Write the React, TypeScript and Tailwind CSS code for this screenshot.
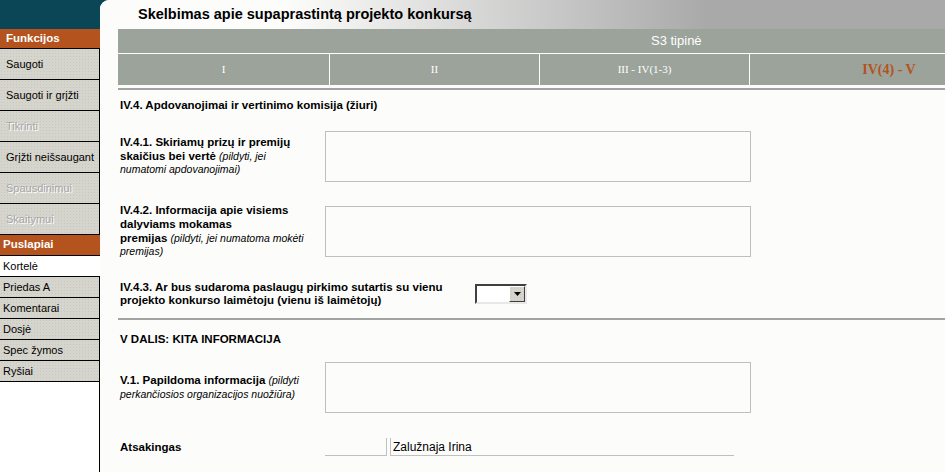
import React from "react";

const font = { fontFamily: '"Liberation Sans", Arial, sans-serif' };

const grey =
  "bg-[#d6d5cd] bg-[radial-gradient(#c9c8c0_0.6px,transparent_0.8px)] bg-[length:3px_3px]";

function SideItem({ label, disabled }: { label: string; disabled?: boolean }) {
  return (
    <div className={"h-[31px] flex items-center pl-[6px] border-b border-r border-black text-[11px] leading-none whitespace-nowrap " + grey}>
      <span
        className={disabled ? "text-[#a6a6a6] [text-shadow:1px_1px_0_#ffffff]" : "text-black"}
      >
        {label}
      </span>
    </div>
  );
}

function PageItem({ label, active }: { label: string; active?: boolean }) {
  return (
    <div
      className={
        "h-[21px] flex items-center pl-[3px] border-b border-black text-[11px] leading-none text-black " +
        (active ? "bg-white" : grey + " border-r")
      }
    >
      {label}
    </div>
  );
}

function Textbox() {
  return <div className="w-[426px] h-[51px] border border-[#bfbfbf] bg-[#fcfdfb] shrink-0" />;
}

export default function App() {
  return (
    <div className="w-[945px] h-[472px] overflow-hidden flex bg-[#fcfdfb] text-black" style={font}>
      {/* Sidebar */}
      <div className="w-[100px] shrink-0 flex flex-col bg-white">
        <div className="h-[29px] bg-[#0b4656]" />
        <div className="h-[20px] bg-[#b4531e] border-b border-black flex items-center pl-[6px] text-white font-bold text-[11.5px]">
          Funkcijos
        </div>
        <SideItem label="Saugoti" />
        <SideItem label="Saugoti ir grįžti" />
        <SideItem label="Tikrinti" disabled />
        <SideItem label="Grįžti neišsaugant" />
        <SideItem label="Spausdinimui" disabled />
        <SideItem label="Skaitymui" disabled />
        <div className="h-[21px] bg-[#b4531e] border-b border-black flex items-center pl-[3px] text-white font-bold text-[11.5px]">
          Puslapiai
        </div>
        <PageItem label="Kortelė" active />
        <PageItem label="Priedas A" />
        <PageItem label="Komentarai" />
        <PageItem label="Dosjė" />
        <PageItem label="Spec žymos" />
        <PageItem label="Ryšiai" />
        <div className="flex-1 border-r border-black" />
      </div>

      {/* Main */}
      <div className="flex-1 flex flex-col min-w-0 bg-[#0b4656]">
        <div className="flex-1 flex flex-col bg-[#fcfdfb] rounded-tl-[9px] overflow-hidden">
          <div className="h-[29px] shrink-0 flex items-center pl-[38px] bg-[linear-gradient(to_right,#fcfdfb_22%,#a9a9a9_72%)]">
            <span className="font-bold text-[14.5px] text-black">Skelbimas apie supaprastintą projekto konkursą</span>
          </div>

          <div className="ml-[18px] w-[910px] shrink-0">
            <div className="h-[24px] bg-[#9ca39b] flex items-center pl-[533px] text-white text-[13px]">
              S3 tipinė
            </div>
            <div className="h-px bg-white" />
            <div className="h-[31px] flex bg-[#9ca39b] text-white text-[11px]" style={{ fontFamily: '"Liberation Serif", serif' }}>
              <div className="w-[212px] border-r border-white flex items-center justify-center">I</div>
              <div className="w-[210px] border-r border-white flex items-center justify-center">II</div>
              <div className="w-[210px] border-r border-white flex items-center justify-center">III - IV(1-3)</div>
              <div className="flex-1 flex items-center justify-center text-[#b4531e] font-bold text-[14px]">IV(4) - V</div>
            </div>
          </div>

          <div className="ml-[18px] mt-[3px] h-[2px] bg-[#a3a3a3] shrink-0" />

          <div className="pl-[20px] flex flex-col text-[11.5px]">
            <div className="mt-[8px] h-[14px] leading-[14px] font-bold">
              IV.4. Apdovanojimai ir vertinimo komisija (žiuri)
            </div>

            <div className="mt-[19px] flex items-center h-[51px]">
              <div className="w-[205px] shrink-0 leading-[13.5px] whitespace-nowrap">
                <span className="font-bold">IV.4.1. Skiriamų prizų ir premijų</span>
                <br />
                <span className="font-bold">skaičius bei vertė</span>{" "}
                <span className="italic text-[10.5px]">(pildyti, jei</span>
                <br />
                <span className="italic text-[10.5px]">numatomi apdovanojimai)</span>
              </div>
              <Textbox />
            </div>

            <div className="mt-[24px] flex items-center h-[51px]">
              <div className="w-[205px] shrink-0 leading-[13.7px] whitespace-nowrap">
                <span className="font-bold">IV.4.2. Informacija apie visiems</span>
                <br />
                <span className="font-bold">dalyviams mokamas</span>
                <br />
                <span className="font-bold">premijas</span>{" "}
                <span className="italic text-[10.5px]">(pildyti, jei numatoma mokėti</span>
                <br />
                <span className="italic text-[10.5px]">premijas)</span>
              </div>
              <Textbox />
            </div>

            <div className="mt-[23px] flex items-center h-[28px]">
              <div className="w-[355px] shrink-0 leading-[13.5px] whitespace-nowrap font-bold">
                IV.4.3. Ar bus sudaroma paslaugų pirkimo sutartis su vienu
                <br />
                projekto konkurso laimėtoju (vienu iš laimėtojų)
              </div>
              <div className="w-[52px] h-[20px] flex border-2 border-t-[#404040] border-l-[#404040] border-b-[#e8e8e8] border-r-[#e8e8e8] bg-white">
                <div className="flex-1" />
                <div className={"w-[16px] h-full border border-t-white border-l-white border-b-[#404040] border-r-[#404040] flex items-center justify-center " + grey}>
                  <svg width="7" height="4" viewBox="0 0 7 4">
                    <path d="M0 0h7L3.5 4z" fill="#000" />
                  </svg>
                </div>
              </div>
            </div>
          </div>

          <div className="ml-[18px] mt-[10px] h-[2px] bg-[#a3a3a3] shrink-0" />

          <div className="pl-[20px] flex flex-col text-[11.5px]">
            <div className="mt-[12px] h-[14px] leading-[14px] font-bold">V DALIS: KITA INFORMACIJA</div>

            <div className="mt-[16px] flex items-center h-[51px]">
              <div className="w-[205px] shrink-0 leading-[13.5px] whitespace-nowrap">
                <span className="font-bold">V.1. Papildoma informacija</span>{" "}
                <span className="italic text-[10.5px]">(pildyti</span>
                <br />
                <span className="italic text-[10.5px]">perkančiosios organizacijos nuožiūra)</span>
              </div>
              <Textbox />
            </div>

            <div className="mt-[25px] flex items-center h-[18px]">
              <div className="w-[205px] shrink-0 font-bold leading-[14px]">Atsakingas</div>
              <div className="w-[62px] h-[18px] border-b border-r border-[#c0c0c0]" />
              <div className="ml-[3px] w-[344px] h-[18px] border-b border-l border-[#c0c0c0] pl-[2px] flex items-end text-[12px] leading-[15px]">
                Zalužnaja Irina
              </div>
            </div>
          </div>
        </div>
      </div>
    </div>
  );
}
